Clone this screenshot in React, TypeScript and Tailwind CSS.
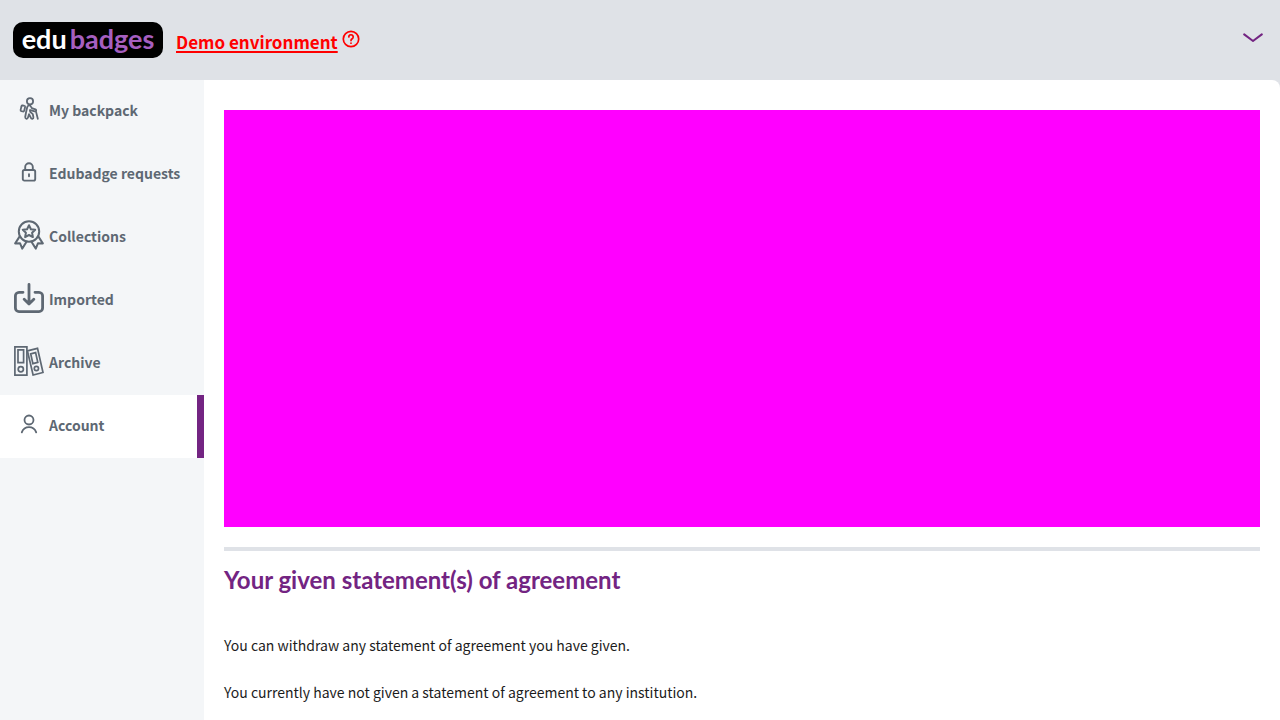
import type { ReactNode } from "react";

const stroke = {
  fill: "none",
  stroke: "currentColor",
  strokeLinecap: "round" as const,
  strokeLinejoin: "round" as const,
};

function BackpackIcon() {
  return (
    <svg width="20" height="24" viewBox="0 0 20 24" strokeWidth="1.8" {...stroke} aria-hidden="true">
      <circle cx="11" cy="4.2" r="3.1" />
      <path d="M3.6 8.4 5.4 8.9Q6.3 9.1 6.1 10L5.2 13.6Q4.9 14.7 4 14.5L2.4 14.1Q1.4 13.8 1.6 12.9L2.5 9.3Q2.7 8.2 3.6 8.4Z" />
      <path d="M9.5 8.4Q8.5 9 8.2 10.3L7 15.5 6.2 20Q6.2 21.6 7.5 21.8 8.7 21.9 9 20.4L10 17.2M9.5 8.4Q11.3 8 12 9.6L12.8 11.2 16.4 12.3Q17.6 12.9 17 14 16.6 14.6 15.6 14.3L11.5 13.1M10.9 13.1 11.2 14.8 13.8 17.2 14.4 20.1Q14.6 21.5 13.4 21.8 12.2 21.9 11.8 20.7L10 17.2M17 14.6 18.8 21.8" />
    </svg>
  );
}

function LockIcon() {
  return (
    <svg width="16" height="20" viewBox="0 0 16 20" strokeWidth="1.9" {...stroke} aria-hidden="true">
      <rect x="1.8" y="8" width="12.4" height="10.6" rx="1.6" />
      <path d="M4.2 8V5.1a3.8 3.8 0 0 1 7.6 0V8M8 12.2v2" />
    </svg>
  );
}

function CollectionsIcon() {
  return (
    <svg width="30" height="30" viewBox="0 0 30 30" strokeWidth="2" {...stroke} aria-hidden="true">
      <circle cx="15" cy="11.5" r="10.2" />
      <path d="m15 5.2 1.9 4 4.3.6-3.1 3 .8 4.3-3.9-2.1-3.9 2.1.8-4.3-3.1-3 4.3-.6ZM5.7 16.4 1.2 23.4l4.8-.2 2.2 5.4 4.5-7.1M24.3 16.4l4.5 7-4.8-.2-2.2 5.4-4.5-7.1" />
    </svg>
  );
}

function ImportedIcon() {
  return (
    <svg width="30" height="30" viewBox="0 0 30 30" strokeWidth="2.8" {...stroke} aria-hidden="true">
      <path d="M9 9.3H5A3.6 3.6 0 0 0 1.4 13v12A3.6 3.6 0 0 0 5 28.6h20a3.6 3.6 0 0 0 3.6-3.6V13A3.6 3.6 0 0 0 25 9.3h-4M15 1.4v19.2M10.2 16.2 15 21l4.8-4.8" />
    </svg>
  );
}

function ArchiveIcon() {
  return (
    <svg width="30" height="30" viewBox="0 0 30 30" strokeWidth="1.7" {...stroke} strokeLinejoin="miter" aria-hidden="true">
      <path d="M.9.9h12v28.2H.9ZM4 3.9h5.6v12.7H4Z" />
      <circle cx="6.8" cy="23.2" r="2.6" />
      <path d="m13.4 4.8 10.1-2.5 5.5 24.2-9.9 2.5ZM16.7 7.8l4.9-1.2 2.2 9.8-4.9 1.2Z" />
      <circle cx="22.4" cy="22.5" r="2.1" />
    </svg>
  );
}

function AccountIcon() {
  return (
    <svg width="18" height="20" viewBox="0 0 18 20" strokeWidth="1.8" {...stroke} aria-hidden="true">
      <circle cx="9" cy="6" r="4.5" />
      <path d="M1.8 18.4C3 15 5.6 13.2 9 13.2s6 1.8 7.2 5.2" />
    </svg>
  );
}

function HelpIcon() {
  return (
    <svg width="18" height="18" viewBox="0 0 18 18" strokeWidth="1.7" {...stroke} aria-hidden="true">
      <circle cx="9" cy="9" r="7.7" />
      <path d="M6.8 7a2.2 2.2 0 1 1 3.4 1.8c-.8.5-1.2.9-1.2 1.8M9 13v.2" />
    </svg>
  );
}

const items: { label: string; icon: ReactNode; active?: boolean }[] = [
  { label: "My backpack", icon: <BackpackIcon /> },
  { label: "Edubadge requests", icon: <LockIcon /> },
  { label: "Collections", icon: <CollectionsIcon /> },
  { label: "Imported", icon: <ImportedIcon /> },
  { label: "Archive", icon: <ArchiveIcon /> },
  { label: "Account", icon: <AccountIcon />, active: true },
];

export default function App() {
  return (
    <div className="flex min-h-screen flex-col bg-[#dfe2e7] font-['Noto_Sans_CJK_SC',sans-serif] text-[#1c1c1c]">
      <header className="flex h-20 shrink-0 items-center px-[13px]">
        <a
          href="#"
          className="flex h-9 w-[150px] items-center justify-center gap-[3px] rounded-[10px] bg-black pb-0.5 font-['Lato',sans-serif] text-[27px] leading-8 font-bold text-white"
        >
          <span>edu</span>
          <span className="text-[#a65fc0]">badges</span>
        </a>
        <a href="#" className="ml-[13px] flex items-center gap-1 text-[#ff0000]">
          <span className="pt-1 text-[17px] leading-6 font-bold underline decoration-2 underline-offset-2">
            Demo environment
          </span>
          <span className="mb-0.5">
            <HelpIcon />
          </span>
        </a>
        <button type="button" aria-label="Open menu" className="mr-1 mb-1 ml-auto text-[#732482]">
          <svg width="20" height="10" viewBox="0 0 20 10" strokeWidth="2" {...stroke} aria-hidden="true">
            <path d="m1.2 1.4 8.8 6.6 8.8-6.6" />
          </svg>
        </button>
      </header>
      <div className="flex grow overflow-hidden rounded-tr-lg bg-white">
        <nav aria-label="Main" className="w-[204px] shrink-0 bg-[#f4f6f8]">
          <ul>
            {items.map(({ label, icon, active }) => (
              <li key={label}>
                <a
                  href="#"
                  aria-current={active ? "page" : undefined}
                  className={
                    active
                      ? "flex h-[63px] items-center gap-[5px] border-r-[7px] border-[#732482] bg-white pb-1 pl-3.5 text-[#5e6873]"
                      : "flex h-[63px] items-center gap-[5px] pb-1 pl-3.5 text-[#5e6873]"
                  }
                >
                  <span className="mb-0.5 flex w-[30px] justify-center">{icon}</span>
                  <span className="text-sm leading-6 font-bold whitespace-nowrap">{label}</span>
                </a>
              </li>
            ))}
          </ul>
        </nav>
        <main className="grow px-5 pt-[30px]">
          <div className="h-[417px] bg-[#ff00ff]" />
          <hr className="mt-5 border-t-4 border-[#dfe2e7]" />
          <h2 className="mt-[13px] font-['Lato',sans-serif] text-2xl leading-8 font-bold text-[#732482]">
            Your given statement(s) of agreement
          </h2>
          <p className="mt-[37px] text-sm leading-6">You can withdraw any statement of agreement you have given.</p>
          <p className="mt-[23px] text-sm leading-6">
            You currently have not given a statement of agreement to any institution.
          </p>
        </main>
      </div>
    </div>
  );
}
